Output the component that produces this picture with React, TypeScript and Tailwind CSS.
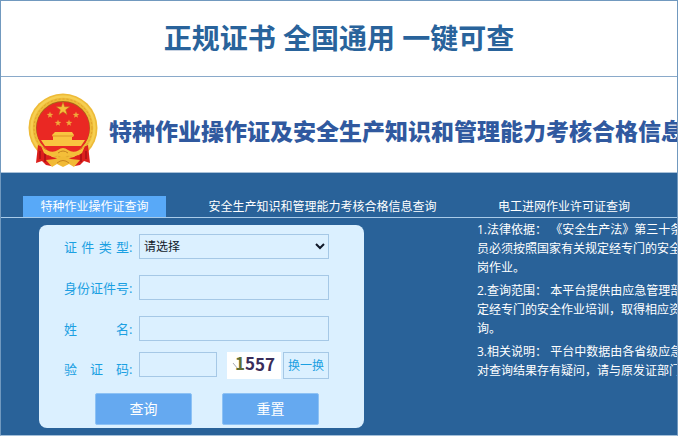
import { useState } from 'react';

const tabs = [
  { label: '特种作业操作证查询', className: 'ml-[22px] w-[143px]' },
  { label: '安全生产知识和管理能力考核合格信息查询', className: 'ml-[28px] w-[257px]' },
  { label: '电工进网作业许可证查询', className: 'ml-[33px] w-[160px]' },
];

const notes = [
  ['1.法律依据： 《安全生产法》第三十条规', '员必须按照国家有关规定经专门的安全作', '岗作业。'],
  ['2.查询范围： 本平台提供由应急管理部门', '定经专门的安全作业培训，取得相应资格', '询。'],
  ['3.相关说明： 平台中数据由各省级应急管', '对查询结果存有疑问，请与原发证部门联'],
];

const star = (cx: number, cy: number, r: number) =>
  Array.from({ length: 10 }, (_, i) => {
    const radius = i % 2 === 0 ? r : r * 0.4;
    const angle = (Math.PI / 5) * i - Math.PI / 2;
    return `${cx + radius * Math.cos(angle)},${cy + radius * Math.sin(angle)}`;
  }).join(' ');

const Emblem = () => (
  <svg viewBox="0 0 70 75" className="w-[70px] h-[75px] shrink-0" aria-hidden="true">
    <circle cx="35" cy="35" r="34.5" fill="#eebb38" />
    <circle cx="35" cy="35" r="31.5" fill="none" stroke="#f6cf52" strokeWidth="2.5" />
    <circle cx="35" cy="35" r="29" fill="none" stroke="#dfa32b" strokeWidth="1" strokeDasharray="2 2" />
    <circle cx="35" cy="35" r="27" fill="#a8641a" />
    <circle cx="35" cy="35.5" r="26.5" fill="#ea2823" />
    <polygon points={star(35, 16, 7)} fill="#f6bf3a" stroke="#b9701d" strokeWidth="0.5" />
    <polygon points={star(22, 22, 3.5)} fill="#f0a83a" />
    <polygon points={star(48, 22, 3.5)} fill="#f0a83a" />
    <polygon points={star(30, 30, 3.5)} fill="#f0a83a" />
    <polygon points={star(41, 30, 3.5)} fill="#f0a83a" />
    <path d="M27 39 H44 L46 42 L45 44 H44 V47 H57 L53 53 H17 L13 47 H25 V44 L24 42 Z" fill="#f9c440" />
    <path d="M25 43 H45" stroke="#dd9427" strokeWidth="1" />
    <path d="M16 53 H54 L48 61 H22 Z" fill="#ea2823" />
    <path d="M10 52 Q20 56 23 62 L23 73 L18 72 L14 68 L8 70 Z" fill="#dc1f1c" />
    <path d="M60 52 Q50 56 47 62 L47 73 L52 72 L56 68 L62 70 Z" fill="#dc1f1c" />
    <path d="M12 58 V66 M17 60 V69 M58 58 V66 M53 60 V69" stroke="#a91014" strokeWidth="1.5" fill="none" />
    <path d="M13 53 Q23 62 30 57 Q35 53 40 57 Q47 62 57 53 L54 60 Q46 66 40 62 L35 65 L30 62 Q24 66 16 60 Z" fill="#f4be39" />
    <path d="M20 62 Q28 67 35 64 Q42 67 50 62 L48 69 H22 Z" fill="#dd211d" />
    <path d="M18 67 L27 66 Q35 61 43 66 L52 67 L46 74 L41 71 L35 74 L29 71 L24 74 Z" fill="#f1ba36" />
    <path d="M30 60 Q35 56 40 60 M29 70 Q35 65 41 70" stroke="#c78420" strokeWidth="1" fill="none" />
  </svg>
);

const FieldLabel = ({ text, htmlFor }: { text: string; htmlFor: string }) => (
  <label htmlFor={htmlFor} className="w-[75px] shrink-0 flex text-[13px] leading-5 text-[#1ba0e2]">
    <span className="w-[65px] flex justify-between">
      {text.split('').map((char, idx) => (
        <span key={idx}>{char}</span>
      ))}
    </span>
    <span>:</span>
  </label>
);

const Captcha = () => (
  <svg viewBox="0 0 54 27" className="w-[54px] h-[27px] ml-[10px]" role="img" aria-label="1557">
    <rect width="54" height="27" fill="#fff" />
    <path d="M6 11 L11 17" stroke="#a9a9b4" strokeWidth="1" />
    <g fontFamily="'Noto Sans CJK SC', sans-serif" fontSize="17" fontWeight="bold">
      <text x="8" y="18" fill="#5f6f35">1</text>
      <text x="18" y="18" fill="#392d5a">5</text>
      <text x="28" y="19" fill="#392d5a">5</text>
      <text x="38" y="19" fill="#392d5a">7</text>
    </g>
  </svg>
);

const App = () => {
  const [activeTab, setActiveTab] = useState(0);
  const inputClass = 'h-[25px] min-w-0 px-1 border border-[#a5c8e6] text-xs text-gray-900 focus:outline-none';
  const actionClass = 'w-[97px] h-8 rounded-xs border border-[#8dc2f5] bg-[#65a9f0] text-sm text-white hover:bg-[#5298e3]';

  return (
    <div className="overflow-hidden bg-white border border-[#7199bf] border-b-[#a3bfd9] font-['Open_Sans','Noto_Sans_CJK_SC',sans-serif]">
      <h1 className="h-[76px] pb-[2px] flex items-center justify-center border-b border-[#8aaaca] text-[28px] font-bold text-[#29639b]">
        正规证书 全国通用 一键可查
      </h1>

      <header className="h-24 flex items-start pt-4 pl-[27px] border-b border-[#a9c1d8]">
        <Emblem />
        <h2 className="ml-[11px] pt-5 text-[23px] leading-9 font-black whitespace-nowrap text-[#30599f]">
          特种作业操作证及安全生产知识和管理能力考核合格信息
        </h2>
      </header>

      <main className="pt-[23px] pb-[7px] bg-[#296299]">
        <nav className="flex border-b border-[#a9cbe9]">
          {tabs.map((tab, idx) => (
            <button
              key={tab.label}
              type="button"
              onClick={() => setActiveTab(idx)}
              className={`${tab.className} h-[21px] shrink-0 text-xs leading-5 text-white whitespace-nowrap ${activeTab === idx ? 'bg-[#58a9f8]' : ''}`}
            >
              {tab.label}
            </button>
          ))}
        </nav>

        <div className="flex items-start">
          <form
            onSubmit={(e) => e.preventDefault()}
            className="w-[325px] shrink-0 mt-[7px] ml-[38px] pt-[9px] pb-[3px] pl-[25px] pr-[35px] rounded-lg bg-[#dbf0ff]"
          >
            <div className="flex items-center mb-4">
              <FieldLabel text="证件类型" htmlFor="type" />
              <select id="type" className="h-[25px] min-w-0 flex-1 border border-[#a5c8e6] bg-[#dbf0ff] text-xs text-gray-900">
                <option>请选择</option>
              </select>
            </div>
            <div className="flex items-center mb-4">
              <FieldLabel text="身份证件号" htmlFor="number" />
              <input id="number" type="text" className={`${inputClass} flex-1`} />
            </div>
            <div className="flex items-center mb-[11px]">
              <FieldLabel text="姓名" htmlFor="name" />
              <input id="name" type="text" className={`${inputClass} flex-1`} />
            </div>
            <div className="flex items-end">
              <FieldLabel text="验证码" htmlFor="code" />
              <input id="code" type="text" className={`${inputClass} w-[78px] self-start`} />
              <Captcha />
              <button type="button" className="h-[27px] flex-1 ml-[2px] border border-[#a5c8e6] text-xs whitespace-nowrap text-[#1ba0e2]">
                换一换
              </button>
            </div>
            <div className="flex gap-[30px] mt-[14px] ml-[31px]">
              <button type="submit" className={actionClass}>查询</button>
              <button type="reset" className={actionClass}>重置</button>
            </div>
          </form>

          <div className="ml-[113px] mt-[2px] space-y-1 text-xs leading-[19px] text-white whitespace-nowrap">
            {notes.map((lines) => (
              <div key={lines[0]}>
                {lines.map((line) => (
                  <p key={line}>{line}</p>
                ))}
              </div>
            ))}
          </div>
        </div>
      </main>
    </div>
  );
};

export default App;
